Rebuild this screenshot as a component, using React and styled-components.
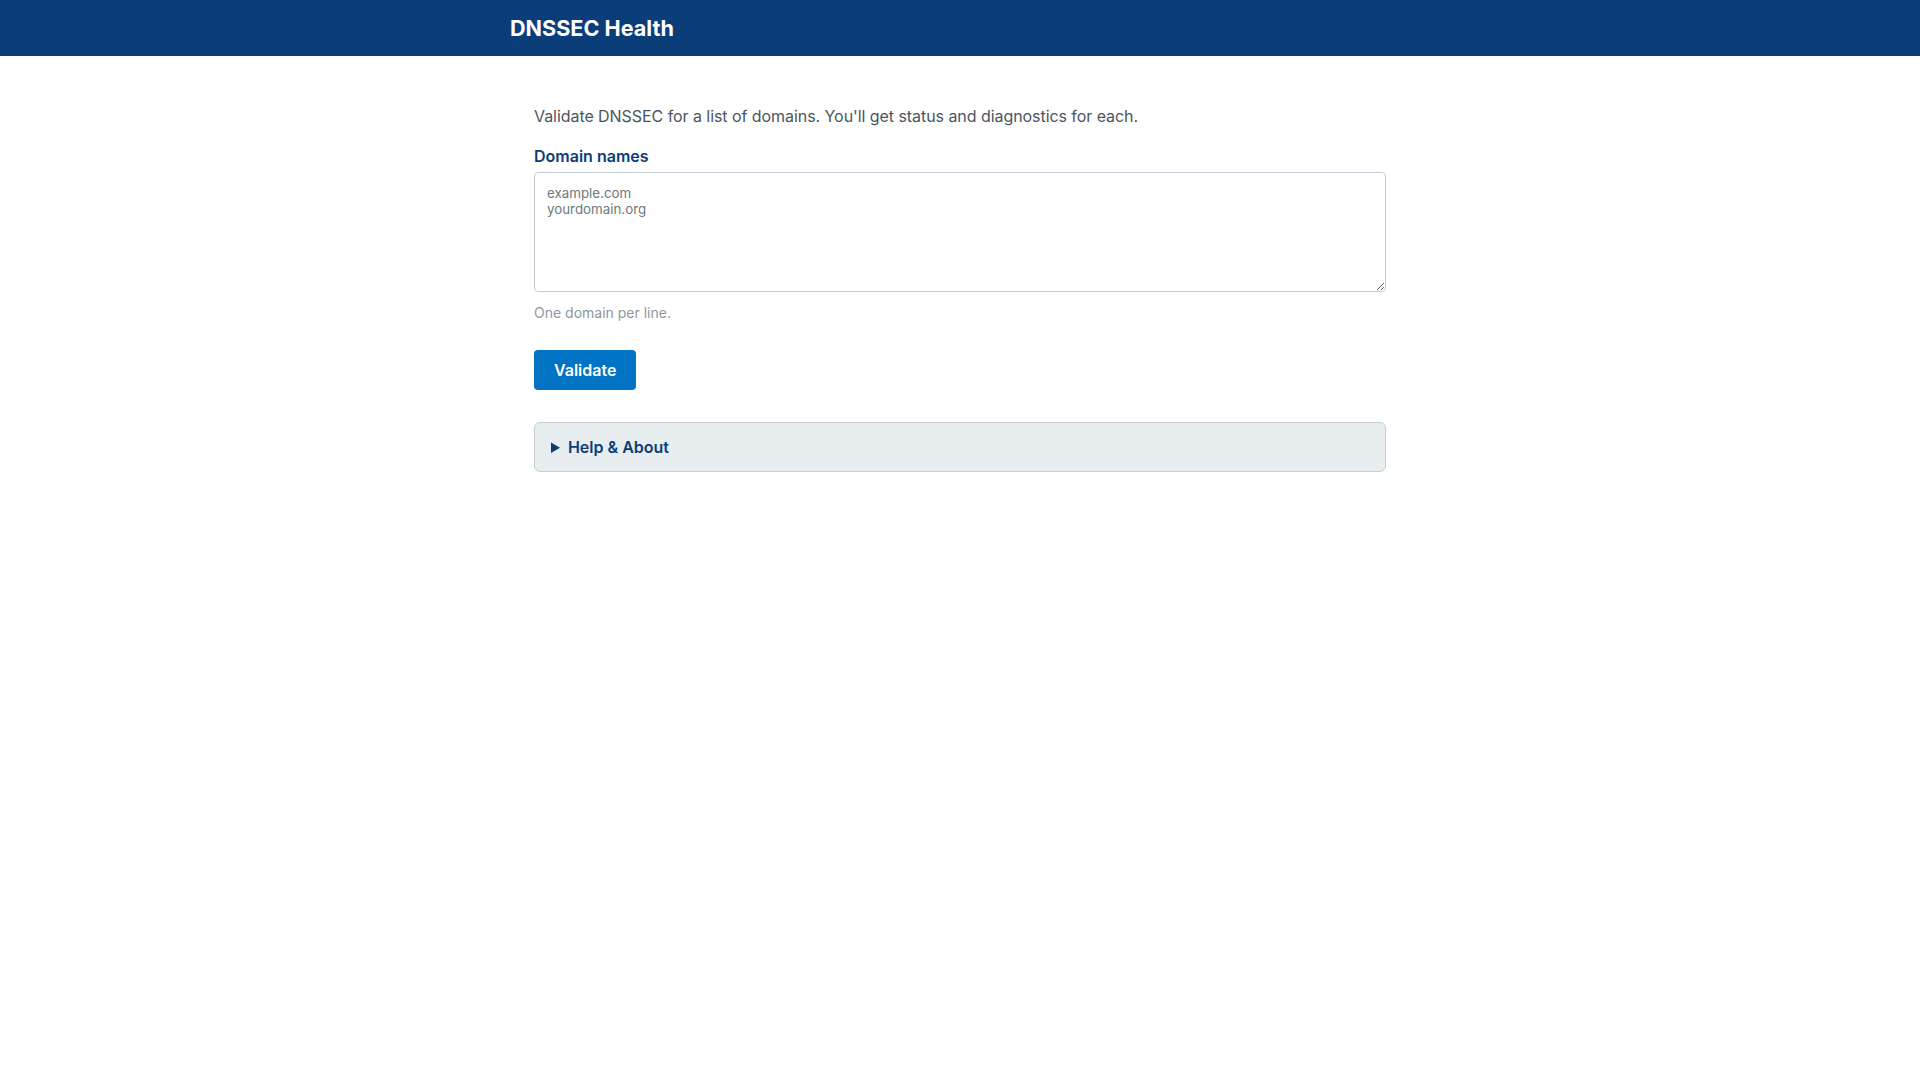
import React from 'react';
import styled, { createGlobalStyle } from 'styled-components';

const GlobalStyle = createGlobalStyle`
  html, body {
    margin: 0;
    padding: 0;
    background: #ffffff;
  }
  body {
    font-family: Inter, "Noto Sans", "Liberation Sans", sans-serif;
    font-size: 16px;
    line-height: 1.5;
    color: #4b5560;
  }
`;

const Header = styled.header`
  background: #0b3d78;
  height: 56px;
  display: flex;
  align-items: center;
`;

const HeaderInner = styled.div`
  width: 900px;
  margin: 0 auto;
`;

const Title = styled.h1`
  margin: 2px 0 0;
  color: #ffffff;
  font-size: 21.6px;
  font-weight: 700;
  line-height: 1;
`;

const Main = styled.main`
  max-width: 900px;
  margin: 0 auto;
  padding: 48px 24px;
  box-sizing: border-box;
`;

const Intro = styled.p`
  margin: 0 0 16px;
  color: #4b5560;
  letter-spacing: -0.06px;
`;

const Label = styled.label`
  display: block;
  margin-bottom: 4px;
  color: #0b3d78;
  font-weight: 600;
`;

const TextArea = styled.textarea`
  display: block;
  width: 100%;
  height: 120px;
  box-sizing: border-box;
  padding: 12px;
  border: 1px solid #c3ccd6;
  border-radius: 4px;
  font-family: Inter, "Noto Sans", "Liberation Sans", sans-serif;
  font-size: 13.33px;
  line-height: normal;
  color: #333;
  resize: vertical;

  &::placeholder {
    color: #71777e;
  }
`;

const Hint = styled.div`
  margin-top: 10px;
  font-size: 14px;
  color: #8d98a3;
`;

const Button = styled.button`
  display: block;
  margin-top: 27px;
  height: 40px;
  padding: 0 20px;
  border: none;
  border-radius: 4px;
  background: #0073c5;
  color: #ffffff;
  font-family: inherit;
  font-size: 16px;
  font-weight: 600;
  cursor: pointer;
`;

const Help = styled.details`
  margin-top: 32px;
  background: #e8edf0;
  border: 1px solid #c5ced8;
  border-radius: 6px;
`;

const Summary = styled.summary`
  padding: 12px 16px;
  color: #0b3d78;
  font-weight: 600;
  cursor: pointer;
`;

export default function App() {
  return (
    <>
      <GlobalStyle />
      <Header>
        <HeaderInner>
          <Title>DNSSEC Health</Title>
        </HeaderInner>
      </Header>
      <Main>
        <Intro>Validate DNSSEC for a list of domains. You'll get status and diagnostics for each.</Intro>
        <Label htmlFor="domains">Domain names</Label>
        <TextArea id="domains" placeholder={'example.com\nyourdomain.org'} />
        <Hint>One domain per line.</Hint>
        <Button type="button">Validate</Button>
        <Help>
          <Summary>Help &amp; About</Summary>
        </Help>
      </Main>
    </>
  );
}
